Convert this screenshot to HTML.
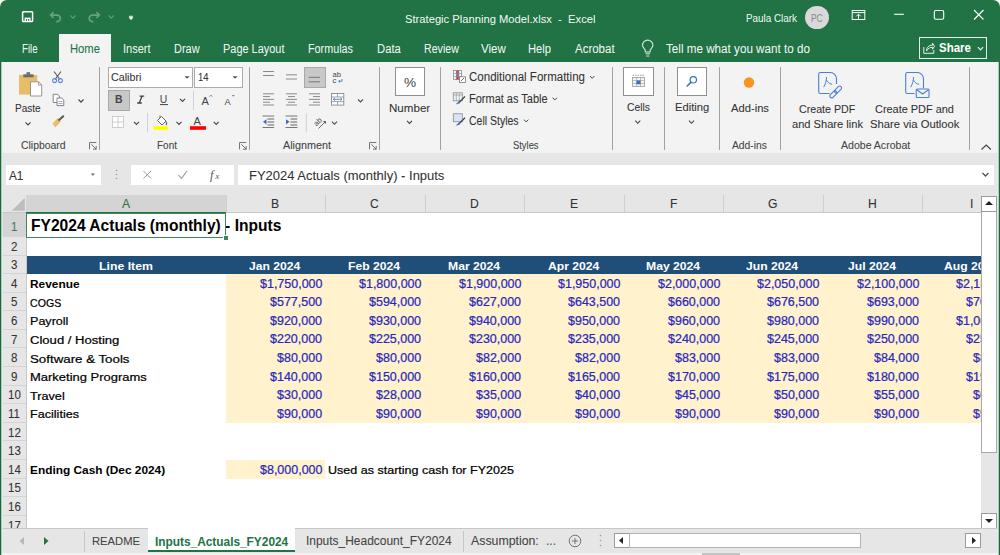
<!DOCTYPE html><html><head><meta charset="utf-8"><style>
html,body{margin:0;padding:0;width:1000px;height:555px;overflow:hidden;background:#fff}
body>div,body div,body svg{position:absolute}
.t{white-space:pre;transform-origin:0 0;font-family:"Liberation Sans",sans-serif}
.g{-webkit-text-stroke:0.22px currentColor}
.u{-webkit-text-stroke:0.08px currentColor}
body{font-family:"Liberation Sans",sans-serif}
</style></head><body>
<div style="left:0px;top:0px;width:1000px;height:63px;background:#217346;border-radius:7px 7px 0 0;"></div>
<div style="left:0px;top:62px;width:1000px;height:493px;background:#f3f3f3;"></div>
<div class="t u" style="left:404.50px;top:13.15px;font-size:11.63px;line-height:11.63px;color:rgba(255,255,255,0.95);transform:scaleX(0.9633);">Strategic Planning Model.xlsx  -  Excel</div>
<div class="t u" style="left:746.00px;top:12.15px;font-size:11.63px;line-height:11.63px;color:rgba(255,255,255,0.95);transform:scaleX(0.8485);">Paula Clark</div>
<div style="left:805px;top:5.5px;width:23.6px;height:23.6px;border-radius:50%;background:#d9d9d9;"></div>
<div class="t u" style="left:811.00px;top:12.65px;font-size:11.05px;line-height:11.05px;color:#8c8c8c;transform:scaleX(0.7624);">PC</div>
<div style="left:59px;top:34px;width:52px;height:29px;background:#f3f3f3;"></div>
<div class="t u" style="left:21.60px;top:42.66px;font-size:12.21px;line-height:12.21px;color:rgba(255,255,255,0.95);transform:scaleX(0.7929);">File</div>
<div class="t u" style="left:69.60px;top:42.66px;font-size:12.21px;line-height:12.21px;color:#217346;transform:scaleX(0.9211);">Home</div>
<div class="t u" style="left:123.40px;top:42.66px;font-size:12.21px;line-height:12.21px;color:rgba(255,255,255,0.95);transform:scaleX(0.9039);">Insert</div>
<div class="t u" style="left:174.40px;top:42.66px;font-size:12.21px;line-height:12.21px;color:rgba(255,255,255,0.95);transform:scaleX(0.8985);">Draw</div>
<div class="t u" style="left:223.00px;top:42.66px;font-size:12.21px;line-height:12.21px;color:rgba(255,255,255,0.95);transform:scaleX(0.8970);">Page Layout</div>
<div class="t u" style="left:308.00px;top:42.66px;font-size:12.21px;line-height:12.21px;color:rgba(255,255,255,0.95);transform:scaleX(0.8844);">Formulas</div>
<div class="t u" style="left:376.60px;top:42.66px;font-size:12.21px;line-height:12.21px;color:rgba(255,255,255,0.95);transform:scaleX(0.9228);">Data</div>
<div class="t u" style="left:423.50px;top:42.66px;font-size:12.21px;line-height:12.21px;color:rgba(255,255,255,0.95);transform:scaleX(0.8718);">Review</div>
<div class="t u" style="left:480.50px;top:42.66px;font-size:12.21px;line-height:12.21px;color:rgba(255,255,255,0.95);transform:scaleX(0.9450);">View</div>
<div class="t u" style="left:528.40px;top:42.66px;font-size:12.21px;line-height:12.21px;color:rgba(255,255,255,0.95);transform:scaleX(0.9199);">Help</div>
<div class="t u" style="left:574.60px;top:42.66px;font-size:12.21px;line-height:12.21px;color:rgba(255,255,255,0.95);transform:scaleX(0.9411);">Acrobat</div>
<div class="t u" style="left:666.00px;top:42.66px;font-size:12.21px;line-height:12.21px;color:rgba(255,255,255,0.95);transform:scaleX(0.9558);">Tell me what you want to do</div>
<div style="left:919px;top:37px;width:68px;height:21.5px;border:1.5px solid rgba(255,255,255,0.9);box-sizing:border-box;"></div>
<div class="t " style="left:939.00px;top:42.42px;font-size:12.50px;line-height:12.50px;color:#fff;font-weight:bold;transform:scaleX(0.9211);">Share</div>
<div class="t u" style="left:15.40px;top:102.65px;font-size:11.05px;line-height:11.05px;color:#333333;transform:scaleX(0.9063);">Paste</div>
<div class="t u" style="left:20.50px;top:141.49px;font-size:10.17px;line-height:10.17px;color:#444444;transform:scaleX(1.0264);">Clipboard</div>
<div class="t u" style="left:157.00px;top:141.49px;font-size:10.17px;line-height:10.17px;color:#444444;transform:scaleX(0.9824);">Font</div>
<div class="t u" style="left:283.00px;top:141.49px;font-size:10.17px;line-height:10.17px;color:#444444;transform:scaleX(1.0609);">Alignment</div>
<div class="t u" style="left:389.40px;top:101.75px;font-size:11.63px;line-height:11.63px;color:#333333;transform:scaleX(0.9962);">Number</div>
<div class="t u" style="left:469.40px;top:71.26px;font-size:12.21px;line-height:12.21px;color:#333333;transform:scaleX(0.9444);">Conditional Formatting</div>
<div class="t u" style="left:469.40px;top:93.06px;font-size:12.21px;line-height:12.21px;color:#333333;transform:scaleX(0.9002);">Format as Table</div>
<div class="t u" style="left:469.40px;top:114.86px;font-size:12.21px;line-height:12.21px;color:#333333;transform:scaleX(0.8600);">Cell Styles</div>
<div class="t u" style="left:513.40px;top:141.49px;font-size:10.17px;line-height:10.17px;color:#444444;transform:scaleX(0.9240);">Styles</div>
<div class="t u" style="left:626.60px;top:101.70px;font-size:11.34px;line-height:11.34px;color:#333333;transform:scaleX(0.9127);">Cells</div>
<div class="t u" style="left:674.80px;top:101.70px;font-size:11.34px;line-height:11.34px;color:#333333;transform:scaleX(0.9866);">Editing</div>
<div class="t u" style="left:731.00px;top:103.00px;font-size:11.34px;line-height:11.34px;color:#333333;transform:scaleX(0.9885);">Add-ins</div>
<div class="t u" style="left:732.00px;top:141.49px;font-size:10.17px;line-height:10.17px;color:#444444;transform:scaleX(1.0146);">Add-ins</div>
<div class="t u" style="left:799.30px;top:103.70px;font-size:11.34px;line-height:11.34px;color:#333333;transform:scaleX(0.9406);">Create PDF</div>
<div class="t u" style="left:792.00px;top:119.30px;font-size:11.34px;line-height:11.34px;color:#333333;transform:scaleX(0.9796);">and Share link</div>
<div class="t u" style="left:875.00px;top:103.70px;font-size:11.34px;line-height:11.34px;color:#333333;transform:scaleX(0.9644);">Create PDF and</div>
<div class="t u" style="left:870.00px;top:119.30px;font-size:11.34px;line-height:11.34px;color:#333333;transform:scaleX(0.9932);">Share via Outlook</div>
<div class="t u" style="left:840.70px;top:141.49px;font-size:10.17px;line-height:10.17px;color:#444444;transform:scaleX(1.0382);">Adobe Acrobat</div>
<div style="left:99px;top:67px;width:1px;height:83px;background:#a2a2a2;"></div>
<div style="left:249px;top:67px;width:1px;height:83px;background:#a2a2a2;"></div>
<div style="left:379px;top:67px;width:1px;height:83px;background:#a2a2a2;"></div>
<div style="left:440px;top:67px;width:1px;height:83px;background:#a2a2a2;"></div>
<div style="left:612px;top:67px;width:1px;height:83px;background:#a2a2a2;"></div>
<div style="left:664px;top:67px;width:1px;height:83px;background:#a2a2a2;"></div>
<div style="left:719px;top:67px;width:1px;height:83px;background:#a2a2a2;"></div>
<div style="left:780px;top:67px;width:1px;height:83px;background:#a2a2a2;"></div>
<div style="left:969px;top:67px;width:1px;height:83px;background:#a2a2a2;"></div>
<div style="left:108px;top:67px;width:84.5px;height:21px;background:#fff;border:1px solid #ababab;box-sizing:border-box;"></div>
<div style="left:194px;top:67px;width:48.5px;height:21px;background:#fff;border:1px solid #ababab;box-sizing:border-box;"></div>
<div class="t u" style="left:110.60px;top:72.18px;font-size:11.48px;line-height:11.48px;color:#333333;transform:scaleX(0.9342);">Calibri</div>
<div class="t u" style="left:197.50px;top:72.18px;font-size:11.48px;line-height:11.48px;color:#333333;transform:scaleX(0.8221);">14</div>
<div style="left:108px;top:90px;width:21.5px;height:21px;background:#c8c8c8;border:1px solid #a8a8a8;box-sizing:border-box;"></div>
<div style="left:304px;top:67px;width:22px;height:21px;background:#c8c8c8;border:1px solid #a8a8a8;box-sizing:border-box;"></div>
<div style="left:394.5px;top:67px;width:30.5px;height:29px;background:#fff;border:1px solid #8f8f8f;box-sizing:border-box;"></div>
<div style="left:623px;top:67px;width:30.5px;height:29px;background:#fff;border:1px solid #8f8f8f;box-sizing:border-box;"></div>
<div style="left:676.5px;top:67px;width:30.5px;height:29px;background:#fff;border:1px solid #8f8f8f;box-sizing:border-box;"></div>
<div style="left:1px;top:153px;width:998px;height:42px;background:#e6e6e6;"></div>
<div style="left:6px;top:165px;width:95px;height:20px;background:#fff;"></div>
<div style="left:131px;top:165px;width:103px;height:20px;background:#fff;"></div>
<div style="left:238px;top:165px;width:756px;height:20px;background:#fff;"></div>
<div class="t u" style="left:9.40px;top:170.02px;font-size:12.50px;line-height:12.50px;color:#333;transform:scaleX(0.9418);">A1</div>
<div class="t u" style="left:248.60px;top:169.12px;font-size:13.08px;line-height:13.08px;color:#333;transform:scaleX(0.9917);">FY2024 Actuals (monthly) - Inputs</div>
<div style="left:0;top:0;width:981px;height:528px;overflow:hidden">
<div style="left:1px;top:195px;width:1000px;height:18px;background:#e6e6e6;"></div>
<div style="left:26px;top:213px;width:1000px;height:315px;background:#ffffff;"></div>
<div style="left:1px;top:213px;width:25.5px;height:315px;background:#e6e6e6;"></div>
<div style="left:26px;top:195px;width:199.5px;height:17px;background:#d4d4d4;"></div>
<svg style="left:1px;top:195px" width="25" height="18" viewBox="1 195 25 18"><path d="M24.8 197.7 V210.7 H11.7 Z" fill="#bdbdbd"/></svg>
<div style="left:225.5px;top:195px;width:1px;height:17px;background:#cfcfcf;"></div>
<div style="left:325px;top:195px;width:1px;height:17px;background:#cfcfcf;"></div>
<div style="left:424.5px;top:195px;width:1px;height:17px;background:#cfcfcf;"></div>
<div style="left:524px;top:195px;width:1px;height:17px;background:#cfcfcf;"></div>
<div style="left:623.5px;top:195px;width:1px;height:17px;background:#cfcfcf;"></div>
<div style="left:723px;top:195px;width:1px;height:17px;background:#cfcfcf;"></div>
<div style="left:822.5px;top:195px;width:1px;height:17px;background:#cfcfcf;"></div>
<div style="left:922px;top:195px;width:1px;height:17px;background:#cfcfcf;"></div>
<div style="left:1px;top:212px;width:1000px;height:1px;background:#c8c8c8;"></div>
<div style="left:26px;top:211.5px;width:199.5px;height:2px;background:#217346;"></div>
<div class="t u" style="left:121.69px;top:197.76px;font-size:12.80px;line-height:12.80px;color:#2f6f4a;transform:scaleX(0.9500);">A</div>
<div class="t u" style="left:271.19px;top:197.76px;font-size:12.80px;line-height:12.80px;color:#333;transform:scaleX(0.9500);">B</div>
<div class="t u" style="left:370.36px;top:197.76px;font-size:12.80px;line-height:12.80px;color:#333;transform:scaleX(0.9500);">C</div>
<div class="t u" style="left:469.86px;top:197.76px;font-size:12.80px;line-height:12.80px;color:#333;transform:scaleX(0.9500);">D</div>
<div class="t u" style="left:569.69px;top:197.76px;font-size:12.80px;line-height:12.80px;color:#333;transform:scaleX(0.9500);">E</div>
<div class="t u" style="left:669.54px;top:197.76px;font-size:12.80px;line-height:12.80px;color:#333;transform:scaleX(0.9500);">F</div>
<div class="t u" style="left:768.02px;top:197.76px;font-size:12.80px;line-height:12.80px;color:#333;transform:scaleX(0.9500);">G</div>
<div class="t u" style="left:867.86px;top:197.76px;font-size:12.80px;line-height:12.80px;color:#333;transform:scaleX(0.9500);">H</div>
<div class="t u" style="left:970.06px;top:197.76px;font-size:12.80px;line-height:12.80px;color:#333;transform:scaleX(0.9500);">I</div>
<div style="left:1px;top:213px;width:25.5px;height:24px;background:#d4d4d4;"></div>
<div style="left:1px;top:236px;width:25px;height:1px;background:#d4d4d4;"></div>
<div class="t u" style="left:10.80px;top:220.56px;font-size:12.80px;line-height:12.80px;color:#3f7a58;transform:scaleX(0.9000);">1</div>
<div style="left:1px;top:255px;width:25px;height:1px;background:#d4d4d4;"></div>
<div class="t u" style="left:10.80px;top:240.76px;font-size:12.80px;line-height:12.80px;color:#333;transform:scaleX(0.9000);">2</div>
<div style="left:1px;top:273px;width:25px;height:1px;background:#d4d4d4;"></div>
<div class="t u" style="left:10.80px;top:259.26px;font-size:12.80px;line-height:12.80px;color:#333;transform:scaleX(0.9000);">3</div>
<div style="left:1px;top:292px;width:25px;height:1px;background:#d4d4d4;"></div>
<div class="t u" style="left:10.80px;top:277.86px;font-size:12.80px;line-height:12.80px;color:#333;transform:scaleX(0.9000);">4</div>
<div style="left:1px;top:310px;width:25px;height:1px;background:#d4d4d4;"></div>
<div class="t u" style="left:10.80px;top:296.46px;font-size:12.80px;line-height:12.80px;color:#333;transform:scaleX(0.9000);">5</div>
<div style="left:1px;top:329px;width:25px;height:1px;background:#d4d4d4;"></div>
<div class="t u" style="left:10.80px;top:315.06px;font-size:12.80px;line-height:12.80px;color:#333;transform:scaleX(0.9000);">6</div>
<div style="left:1px;top:347px;width:25px;height:1px;background:#d4d4d4;"></div>
<div class="t u" style="left:10.80px;top:333.66px;font-size:12.80px;line-height:12.80px;color:#333;transform:scaleX(0.9000);">7</div>
<div style="left:1px;top:366px;width:25px;height:1px;background:#d4d4d4;"></div>
<div class="t u" style="left:10.80px;top:352.26px;font-size:12.80px;line-height:12.80px;color:#333;transform:scaleX(0.9000);">8</div>
<div style="left:1px;top:385px;width:25px;height:1px;background:#d4d4d4;"></div>
<div class="t u" style="left:10.80px;top:370.86px;font-size:12.80px;line-height:12.80px;color:#333;transform:scaleX(0.9000);">9</div>
<div style="left:1px;top:403px;width:25px;height:1px;background:#d4d4d4;"></div>
<div class="t u" style="left:7.59px;top:389.46px;font-size:12.80px;line-height:12.80px;color:#333;transform:scaleX(0.9000);">10</div>
<div style="left:1px;top:422px;width:25px;height:1px;background:#d4d4d4;"></div>
<div class="t u" style="left:8.02px;top:408.06px;font-size:12.80px;line-height:12.80px;color:#333;transform:scaleX(0.9000);">11</div>
<div style="left:1px;top:440px;width:25px;height:1px;background:#d4d4d4;"></div>
<div class="t u" style="left:7.59px;top:426.66px;font-size:12.80px;line-height:12.80px;color:#333;transform:scaleX(0.9000);">12</div>
<div style="left:1px;top:459px;width:25px;height:1px;background:#d4d4d4;"></div>
<div class="t u" style="left:7.59px;top:445.26px;font-size:12.80px;line-height:12.80px;color:#333;transform:scaleX(0.9000);">13</div>
<div style="left:1px;top:478px;width:25px;height:1px;background:#d4d4d4;"></div>
<div class="t u" style="left:7.59px;top:463.86px;font-size:12.80px;line-height:12.80px;color:#333;transform:scaleX(0.9000);">14</div>
<div style="left:1px;top:496px;width:25px;height:1px;background:#d4d4d4;"></div>
<div class="t u" style="left:7.59px;top:482.46px;font-size:12.80px;line-height:12.80px;color:#333;transform:scaleX(0.9000);">15</div>
<div style="left:1px;top:515px;width:25px;height:1px;background:#d4d4d4;"></div>
<div class="t u" style="left:7.59px;top:501.06px;font-size:12.80px;line-height:12.80px;color:#333;transform:scaleX(0.9000);">16</div>
<div style="left:1px;top:533px;width:25px;height:1px;background:#d4d4d4;"></div>
<div class="t u" style="left:7.59px;top:519.66px;font-size:12.80px;line-height:12.80px;color:#333;transform:scaleX(0.9000);">17</div>
<div style="left:26px;top:213px;width:1px;height:315px;background:#c8c8c8;"></div>
<div style="left:27px;top:255.5px;width:1000px;height:18.5px;background:#1f4e78;"></div>
<div style="left:225.5px;top:274px;width:800px;height:148.8px;background:#fff2cc;"></div>
<div style="left:225.5px;top:460px;width:99.5px;height:18.6px;background:#fff2cc;"></div>
<div class="t " style="left:30.60px;top:218.06px;font-size:15.99px;line-height:15.99px;color:#000;font-weight:bold;transform:scaleX(0.9742);">FY2024 Actuals (monthly) - Inputs</div>
<div style="left:26px;top:212.5px;width:200px;height:25px;border:1.5px solid #3b8a5a;box-sizing:border-box;"></div>
<div style="left:223px;top:235px;width:4px;height:4px;background:#3b8a5a;border:1px solid #fff;box-sizing:content-box;"></div>
<div class="t " style="left:99.00px;top:259.95px;font-size:11.63px;line-height:11.63px;color:#fff;font-weight:bold;transform:scaleX(1.0579);">Line Item</div>
<div class="t " style="left:249.05px;top:259.98px;font-size:11.60px;line-height:11.60px;color:#fff;font-weight:bold;transform:scaleX(1.0486);">Jan 2024</div>
<div class="t " style="left:348.22px;top:259.98px;font-size:11.60px;line-height:11.60px;color:#fff;font-weight:bold;transform:scaleX(1.0486);">Feb 2024</div>
<div class="t " style="left:447.71px;top:259.98px;font-size:11.60px;line-height:11.60px;color:#fff;font-weight:bold;transform:scaleX(1.0486);">Mar 2024</div>
<div class="t " style="left:547.56px;top:259.98px;font-size:11.60px;line-height:11.60px;color:#fff;font-weight:bold;transform:scaleX(1.0486);">Apr 2024</div>
<div class="t " style="left:645.70px;top:259.98px;font-size:11.60px;line-height:11.60px;color:#fff;font-weight:bold;transform:scaleX(1.0486);">May 2024</div>
<div class="t " style="left:746.22px;top:259.98px;font-size:11.60px;line-height:11.60px;color:#fff;font-weight:bold;transform:scaleX(1.0486);">Jun 2024</div>
<div class="t " style="left:847.74px;top:259.98px;font-size:11.60px;line-height:11.60px;color:#fff;font-weight:bold;transform:scaleX(1.0486);">Jul 2024</div>
<div class="t " style="left:944.21px;top:259.98px;font-size:11.60px;line-height:11.60px;color:#fff;font-weight:bold;transform:scaleX(1.0486);">Aug 2024</div>
<div class="t " style="left:30.00px;top:278.15px;font-size:11.63px;line-height:11.63px;color:#000;font-weight:bold;transform:scaleX(1.0212);">Revenue</div>
<div class="t g" style="left:259.50px;top:277.50px;font-size:12.40px;line-height:12.40px;color:#2727bd;transform:scaleX(1.0071);">$1,750,000</div>
<div class="t g" style="left:359.00px;top:277.50px;font-size:12.40px;line-height:12.40px;color:#2727bd;transform:scaleX(1.0071);">$1,800,000</div>
<div class="t g" style="left:458.50px;top:277.50px;font-size:12.40px;line-height:12.40px;color:#2727bd;transform:scaleX(1.0071);">$1,900,000</div>
<div class="t g" style="left:558.00px;top:277.50px;font-size:12.40px;line-height:12.40px;color:#2727bd;transform:scaleX(1.0071);">$1,950,000</div>
<div class="t g" style="left:657.50px;top:277.50px;font-size:12.40px;line-height:12.40px;color:#2727bd;transform:scaleX(1.0071);">$2,000,000</div>
<div class="t g" style="left:757.00px;top:277.50px;font-size:12.40px;line-height:12.40px;color:#2727bd;transform:scaleX(1.0071);">$2,050,000</div>
<div class="t g" style="left:856.50px;top:277.50px;font-size:12.40px;line-height:12.40px;color:#2727bd;transform:scaleX(1.0071);">$2,100,000</div>
<div class="t g" style="left:956.00px;top:277.50px;font-size:12.40px;line-height:12.40px;color:#2727bd;transform:scaleX(1.0071);">$2,150,000</div>
<div class="t g" style="left:30.00px;top:296.75px;font-size:11.63px;line-height:11.63px;color:#000;transform:scaleX(0.9112);">COGS</div>
<div class="t g" style="left:269.91px;top:296.10px;font-size:12.40px;line-height:12.40px;color:#2727bd;transform:scaleX(1.0071);">$577,500</div>
<div class="t g" style="left:369.41px;top:296.10px;font-size:12.40px;line-height:12.40px;color:#2727bd;transform:scaleX(1.0071);">$594,000</div>
<div class="t g" style="left:468.91px;top:296.10px;font-size:12.40px;line-height:12.40px;color:#2727bd;transform:scaleX(1.0071);">$627,000</div>
<div class="t g" style="left:568.41px;top:296.10px;font-size:12.40px;line-height:12.40px;color:#2727bd;transform:scaleX(1.0071);">$643,500</div>
<div class="t g" style="left:667.91px;top:296.10px;font-size:12.40px;line-height:12.40px;color:#2727bd;transform:scaleX(1.0071);">$660,000</div>
<div class="t g" style="left:767.41px;top:296.10px;font-size:12.40px;line-height:12.40px;color:#2727bd;transform:scaleX(1.0071);">$676,500</div>
<div class="t g" style="left:866.91px;top:296.10px;font-size:12.40px;line-height:12.40px;color:#2727bd;transform:scaleX(1.0071);">$693,000</div>
<div class="t g" style="left:966.41px;top:296.10px;font-size:12.40px;line-height:12.40px;color:#2727bd;transform:scaleX(1.0071);">$709,500</div>
<div class="t g" style="left:30.00px;top:315.35px;font-size:11.63px;line-height:11.63px;color:#000;transform:scaleX(1.0804);">Payroll</div>
<div class="t g" style="left:269.91px;top:314.70px;font-size:12.40px;line-height:12.40px;color:#2727bd;transform:scaleX(1.0071);">$920,000</div>
<div class="t g" style="left:369.41px;top:314.70px;font-size:12.40px;line-height:12.40px;color:#2727bd;transform:scaleX(1.0071);">$930,000</div>
<div class="t g" style="left:468.91px;top:314.70px;font-size:12.40px;line-height:12.40px;color:#2727bd;transform:scaleX(1.0071);">$940,000</div>
<div class="t g" style="left:568.41px;top:314.70px;font-size:12.40px;line-height:12.40px;color:#2727bd;transform:scaleX(1.0071);">$950,000</div>
<div class="t g" style="left:667.91px;top:314.70px;font-size:12.40px;line-height:12.40px;color:#2727bd;transform:scaleX(1.0071);">$960,000</div>
<div class="t g" style="left:767.41px;top:314.70px;font-size:12.40px;line-height:12.40px;color:#2727bd;transform:scaleX(1.0071);">$980,000</div>
<div class="t g" style="left:866.91px;top:314.70px;font-size:12.40px;line-height:12.40px;color:#2727bd;transform:scaleX(1.0071);">$990,000</div>
<div class="t g" style="left:956.00px;top:314.70px;font-size:12.40px;line-height:12.40px;color:#2727bd;transform:scaleX(1.0071);">$1,000,000</div>
<div class="t g" style="left:30.00px;top:333.95px;font-size:11.63px;line-height:11.63px;color:#000;transform:scaleX(1.1245);">Cloud / Hosting</div>
<div class="t g" style="left:269.91px;top:333.30px;font-size:12.40px;line-height:12.40px;color:#2727bd;transform:scaleX(1.0071);">$220,000</div>
<div class="t g" style="left:369.41px;top:333.30px;font-size:12.40px;line-height:12.40px;color:#2727bd;transform:scaleX(1.0071);">$225,000</div>
<div class="t g" style="left:468.91px;top:333.30px;font-size:12.40px;line-height:12.40px;color:#2727bd;transform:scaleX(1.0071);">$230,000</div>
<div class="t g" style="left:568.41px;top:333.30px;font-size:12.40px;line-height:12.40px;color:#2727bd;transform:scaleX(1.0071);">$235,000</div>
<div class="t g" style="left:667.91px;top:333.30px;font-size:12.40px;line-height:12.40px;color:#2727bd;transform:scaleX(1.0071);">$240,000</div>
<div class="t g" style="left:767.41px;top:333.30px;font-size:12.40px;line-height:12.40px;color:#2727bd;transform:scaleX(1.0071);">$245,000</div>
<div class="t g" style="left:866.91px;top:333.30px;font-size:12.40px;line-height:12.40px;color:#2727bd;transform:scaleX(1.0071);">$250,000</div>
<div class="t g" style="left:966.41px;top:333.30px;font-size:12.40px;line-height:12.40px;color:#2727bd;transform:scaleX(1.0071);">$255,000</div>
<div class="t g" style="left:30.00px;top:352.55px;font-size:11.63px;line-height:11.63px;color:#000;transform:scaleX(1.1432);">Software &amp; Tools</div>
<div class="t g" style="left:276.86px;top:351.90px;font-size:12.40px;line-height:12.40px;color:#2727bd;transform:scaleX(1.0071);">$80,000</div>
<div class="t g" style="left:376.36px;top:351.90px;font-size:12.40px;line-height:12.40px;color:#2727bd;transform:scaleX(1.0071);">$80,000</div>
<div class="t g" style="left:475.86px;top:351.90px;font-size:12.40px;line-height:12.40px;color:#2727bd;transform:scaleX(1.0071);">$82,000</div>
<div class="t g" style="left:575.36px;top:351.90px;font-size:12.40px;line-height:12.40px;color:#2727bd;transform:scaleX(1.0071);">$82,000</div>
<div class="t g" style="left:674.86px;top:351.90px;font-size:12.40px;line-height:12.40px;color:#2727bd;transform:scaleX(1.0071);">$83,000</div>
<div class="t g" style="left:774.36px;top:351.90px;font-size:12.40px;line-height:12.40px;color:#2727bd;transform:scaleX(1.0071);">$83,000</div>
<div class="t g" style="left:873.86px;top:351.90px;font-size:12.40px;line-height:12.40px;color:#2727bd;transform:scaleX(1.0071);">$84,000</div>
<div class="t g" style="left:973.36px;top:351.90px;font-size:12.40px;line-height:12.40px;color:#2727bd;transform:scaleX(1.0071);">$85,000</div>
<div class="t g" style="left:30.00px;top:371.15px;font-size:11.63px;line-height:11.63px;color:#000;transform:scaleX(1.1157);">Marketing Programs</div>
<div class="t g" style="left:269.91px;top:370.50px;font-size:12.40px;line-height:12.40px;color:#2727bd;transform:scaleX(1.0071);">$140,000</div>
<div class="t g" style="left:369.41px;top:370.50px;font-size:12.40px;line-height:12.40px;color:#2727bd;transform:scaleX(1.0071);">$150,000</div>
<div class="t g" style="left:468.91px;top:370.50px;font-size:12.40px;line-height:12.40px;color:#2727bd;transform:scaleX(1.0071);">$160,000</div>
<div class="t g" style="left:568.41px;top:370.50px;font-size:12.40px;line-height:12.40px;color:#2727bd;transform:scaleX(1.0071);">$165,000</div>
<div class="t g" style="left:667.91px;top:370.50px;font-size:12.40px;line-height:12.40px;color:#2727bd;transform:scaleX(1.0071);">$170,000</div>
<div class="t g" style="left:767.41px;top:370.50px;font-size:12.40px;line-height:12.40px;color:#2727bd;transform:scaleX(1.0071);">$175,000</div>
<div class="t g" style="left:866.91px;top:370.50px;font-size:12.40px;line-height:12.40px;color:#2727bd;transform:scaleX(1.0071);">$180,000</div>
<div class="t g" style="left:966.41px;top:370.50px;font-size:12.40px;line-height:12.40px;color:#2727bd;transform:scaleX(1.0071);">$190,000</div>
<div class="t g" style="left:30.00px;top:389.75px;font-size:11.63px;line-height:11.63px;color:#000;transform:scaleX(1.0886);">Travel</div>
<div class="t g" style="left:276.86px;top:389.10px;font-size:12.40px;line-height:12.40px;color:#2727bd;transform:scaleX(1.0071);">$30,000</div>
<div class="t g" style="left:376.36px;top:389.10px;font-size:12.40px;line-height:12.40px;color:#2727bd;transform:scaleX(1.0071);">$28,000</div>
<div class="t g" style="left:475.86px;top:389.10px;font-size:12.40px;line-height:12.40px;color:#2727bd;transform:scaleX(1.0071);">$35,000</div>
<div class="t g" style="left:575.36px;top:389.10px;font-size:12.40px;line-height:12.40px;color:#2727bd;transform:scaleX(1.0071);">$40,000</div>
<div class="t g" style="left:674.86px;top:389.10px;font-size:12.40px;line-height:12.40px;color:#2727bd;transform:scaleX(1.0071);">$45,000</div>
<div class="t g" style="left:774.36px;top:389.10px;font-size:12.40px;line-height:12.40px;color:#2727bd;transform:scaleX(1.0071);">$50,000</div>
<div class="t g" style="left:873.86px;top:389.10px;font-size:12.40px;line-height:12.40px;color:#2727bd;transform:scaleX(1.0071);">$55,000</div>
<div class="t g" style="left:973.36px;top:389.10px;font-size:12.40px;line-height:12.40px;color:#2727bd;transform:scaleX(1.0071);">$60,000</div>
<div class="t g" style="left:30.00px;top:408.35px;font-size:11.63px;line-height:11.63px;color:#000;transform:scaleX(1.0834);">Facilities</div>
<div class="t g" style="left:276.86px;top:407.70px;font-size:12.40px;line-height:12.40px;color:#2727bd;transform:scaleX(1.0071);">$90,000</div>
<div class="t g" style="left:376.36px;top:407.70px;font-size:12.40px;line-height:12.40px;color:#2727bd;transform:scaleX(1.0071);">$90,000</div>
<div class="t g" style="left:475.86px;top:407.70px;font-size:12.40px;line-height:12.40px;color:#2727bd;transform:scaleX(1.0071);">$90,000</div>
<div class="t g" style="left:575.36px;top:407.70px;font-size:12.40px;line-height:12.40px;color:#2727bd;transform:scaleX(1.0071);">$90,000</div>
<div class="t g" style="left:674.86px;top:407.70px;font-size:12.40px;line-height:12.40px;color:#2727bd;transform:scaleX(1.0071);">$90,000</div>
<div class="t g" style="left:774.36px;top:407.70px;font-size:12.40px;line-height:12.40px;color:#2727bd;transform:scaleX(1.0071);">$90,000</div>
<div class="t g" style="left:873.86px;top:407.70px;font-size:12.40px;line-height:12.40px;color:#2727bd;transform:scaleX(1.0071);">$90,000</div>
<div class="t g" style="left:973.36px;top:407.70px;font-size:12.40px;line-height:12.40px;color:#2727bd;transform:scaleX(1.0071);">$90,000</div>
<div class="t " style="left:30.20px;top:464.15px;font-size:11.63px;line-height:11.63px;color:#000;font-weight:bold;transform:scaleX(1.0206);">Ending Cash (Dec 2024)</div>
<div class="t g" style="left:259.50px;top:463.50px;font-size:12.40px;line-height:12.40px;color:#2727bd;transform:scaleX(1.0071);">$8,000,000</div>
<div class="t g" style="left:328.00px;top:464.15px;font-size:11.63px;line-height:11.63px;color:#000;transform:scaleX(1.0773);">Used as starting cash for FY2025</div>
</div>
<div style="left:981px;top:195px;width:18px;height:333px;background:#e6e6e6;"></div>
<div style="left:981px;top:195.5px;width:16px;height:16px;background:#fff;border:1.5px solid #9a9a9a;box-sizing:border-box;"></div>
<div style="left:981px;top:211.5px;width:16px;height:241px;background:#fff;border:1.5px solid #a8a8a8;border-top:0;box-sizing:border-box;"></div>
<div style="left:981px;top:512.5px;width:16px;height:16px;background:#fff;border:1.5px solid #9a9a9a;box-sizing:border-box;"></div>
<svg style="left:984px;top:199px;" width="10" height="8" viewBox="0 0 10 8"><path d="M1 6 L5 2 L9 6 Z" fill="#222"/></svg>
<svg style="left:984px;top:517px;" width="10" height="8" viewBox="0 0 10 8"><path d="M1 2 L5 6 L9 2 Z" fill="#222"/></svg>
<div style="left:1px;top:528px;width:998px;height:24.5px;background:#e6e6e6;"></div>
<div style="left:1px;top:528px;width:998px;height:1px;background:#c6c6c6;"></div>
<div style="left:1px;top:552.5px;width:998px;height:2.5px;background:#f3f3f3;"></div>
<div style="left:702px;top:553px;width:38px;height:2px;background:#c4c4c4;"></div>
<div style="left:83.5px;top:531px;width:1px;height:21px;background:#c6c6c6;"></div>
<div style="left:148px;top:528px;width:147px;height:24px;background:#ffffff;"></div>
<div style="left:148px;top:549.5px;width:147px;height:2px;background:#217346;"></div>
<div style="left:463px;top:531px;width:1px;height:21px;background:#c6c6c6;"></div>
<div class="t u" style="left:91.50px;top:535.35px;font-size:11.63px;line-height:11.63px;color:#444;transform:scaleX(0.9649);">README</div>
<div class="t " style="left:154.80px;top:534.52px;font-size:13.08px;line-height:13.08px;color:#217346;font-weight:bold;transform:scaleX(0.9070);">Inputs_Actuals_FY2024</div>
<div class="t u" style="left:306.00px;top:535.02px;font-size:12.50px;line-height:12.50px;color:#444;transform:scaleX(0.9566);">Inputs_Headcount_FY2024</div>
<div class="t u" style="left:471.00px;top:535.02px;font-size:12.50px;line-height:12.50px;color:#444;transform:scaleX(0.9857);">Assumption:</div>
<div class="t u" style="left:546.00px;top:535.02px;font-size:12.50px;line-height:12.50px;color:#217346;transform:scaleX(0.9598);">...</div>
<svg style="left:16px;top:535px;" width="40" height="12" viewBox="0 0 40 12"><path d="M8 2 L3.5 6 L8 10 Z" fill="#b8b8b8"/><path d="M28 2 L32.5 6 L28 10 Z" fill="#217346"/></svg>
<svg style="left:568px;top:534px;" width="14" height="14" viewBox="0 0 14 14"><circle cx="7" cy="7" r="5.8" fill="none" stroke="#777" stroke-width="1"/><path d="M7 4 V10 M4 7 H10" stroke="#777" stroke-width="1"/></svg>
<svg style="left:598px;top:533px;" width="5" height="16" viewBox="0 0 5 16"><circle cx="2.5" cy="2.5" r="0.8" fill="#999"/><circle cx="2.5" cy="7.5" r="0.8" fill="#999"/><circle cx="2.5" cy="12.5" r="0.8" fill="#999"/></svg>
<div style="left:613.5px;top:533px;width:16px;height:14.5px;background:#fff;border:1px solid #9a9a9a;box-sizing:border-box;"></div>
<div style="left:629px;top:533px;width:232px;height:14.5px;background:#fff;border:1px solid #b4b4b4;box-sizing:border-box;"></div>
<div style="left:965px;top:533px;width:16px;height:14.5px;background:#fff;border:1px solid #9a9a9a;box-sizing:border-box;"></div>
<svg style="left:617px;top:536px;" width="9" height="9" viewBox="0 0 9 9"><path d="M6 1 L2 4.5 L6 8 Z" fill="#222"/></svg>
<svg style="left:969px;top:536px;" width="9" height="9" viewBox="0 0 9 9"><path d="M3 1 L7 4.5 L3 8 Z" fill="#222"/></svg>
<svg style="left:18px;top:6px" width="122" height="22" viewBox="18 6 122 22"><rect x="22.6" y="11.8" width="10" height="9.8" rx="0.8" fill="none" stroke="#fff" stroke-width="1.5"/><rect x="24.6" y="17.6" width="6" height="4.2" fill="#fff"/><rect x="25.9" y="19" width="1.1" height="1.8" fill="#217346"/><rect x="28.2" y="19" width="1.1" height="1.8" fill="#217346"/><path d="M53.6 12.2 L50.6 15.1 L53.6 18 M51 15.1 H57 A3.3 3.3 0 0 1 57 21.7 H56.2" fill="none" stroke="rgba(255,255,255,0.32)" stroke-width="1.7"/><path d="M70.3 15.299999999999999 L73 18.099999999999998 L75.7 15.299999999999999" fill="none" stroke="rgba(255,255,255,0.3)" stroke-width="1.2"/><path d="M96.4 12.2 L99.4 15.1 L96.4 18 M99 15.1 H92.5 A3.3 3.3 0 0 0 92.5 21.7 H93.3" fill="none" stroke="rgba(255,255,255,0.32)" stroke-width="1.7"/><path d="M108.5 15.299999999999999 L111.2 18.099999999999998 L113.9 15.299999999999999" fill="none" stroke="rgba(255,255,255,0.3)" stroke-width="1.2"/><path d="M129 16.3 H133 M129.3 17.6 L131 19.6 L132.7 17.6 Z" fill="#fff" stroke="#fff" stroke-width="0.9"/></svg>
<svg style="left:845px;top:4px" width="150" height="24" viewBox="845 4 150 24"><rect x="852.2" y="10.5" width="12.6" height="9" fill="none" stroke="#fff" stroke-width="1"/><path d="M852.2 12.6 H864.8" stroke="#fff" stroke-width="1"/><path d="M858.5 19.3 V14.2 M856.3 16.3 L858.5 14.1 L860.7 16.3" fill="none" stroke="#fff" stroke-width="1"/><path d="M894.2 14.3 H903.8" stroke="#fff" stroke-width="1.1"/><rect x="934.3" y="10.5" width="9.4" height="8.8" rx="1.5" fill="none" stroke="#fff" stroke-width="1.1"/><path d="M974 10 L983.5 19.5 M983.5 10 L974 19.5" stroke="#fff" stroke-width="1.1"/></svg>
<svg style="left:638px;top:38px" width="20" height="22" viewBox="638 38 20 22"><path d="M645.3 52 V50.6 C645.3 49 642.5 47.8 642.5 45.3 A5.2 5.2 0 0 1 652.9 45.3 C652.9 47.8 650.1 49 650.1 50.6 V52 Z" fill="none" stroke="#d8eadf" stroke-width="1.1"/><path d="M645.5 53.8 H650 M646.2 56 H649.3" stroke="#d8eadf" stroke-width="1.1"/></svg>
<svg style="left:920px;top:38px" width="70" height="20" viewBox="920 38 70 20"><path d="M923.8 47 V53.3 H933.8 V50" fill="none" stroke="#e8f2ec" stroke-width="1"/><path d="M926.5 51 C926.5 47 929 45.2 932.5 45.2 V43.2 L934.5 46.3 L932.5 49.3 V47.3 C930 47.3 928 48.3 926.5 51 Z" fill="none" stroke="#e8f2ec" stroke-width="1"/><path d="M977.9 47.1 L980.5 49.9 L983.1 47.1" fill="none" stroke="#e8f2ec" stroke-width="1.1"/></svg>
<svg style="left:15px;top:66px" width="85" height="89" viewBox="15 66 85 89"><rect x="19" y="75" width="18.3" height="19.6" fill="#e8bd6a"/><rect x="23.3" y="74.3" width="10.3" height="3" fill="#6b6b6b"/><rect x="26.5" y="72.2" width="3.6" height="2.4" fill="#6b6b6b"/><path d="M30.5 81.8 H38.5 L41.7 85 V96 H30.5 Z" fill="#fff" stroke="#8a8a8a" stroke-width="0.9"/><path d="M38.5 81.8 V85 H41.7" fill="none" stroke="#8a8a8a" stroke-width="0.8"/><path d="M25.5 122.4 L28 125.0 L30.5 122.4" fill="none" stroke="#444" stroke-width="1.1"/><path d="M54 71.5 L60 79.5 M61 71.5 L55 79.5" stroke="#555" stroke-width="1.1"/><circle cx="54.6" cy="80.6" r="2" fill="none" stroke="#5a8ad0" stroke-width="1.1"/><circle cx="60.4" cy="80.6" r="2" fill="none" stroke="#5a8ad0" stroke-width="1.1"/><path d="M53.2 94.3 H57.6 L59.3 96 V102.5 H53.2 Z" fill="#fff" stroke="#777" stroke-width="0.9"/><path d="M57 98 H61.8 L63.8 100 V105.6 H57 Z" fill="#fff" stroke="#777" stroke-width="0.9"/><path d="M58.3 101.5 H62.5 M58.3 103.5 H62.5" stroke="#7c9cc8" stroke-width="0.8"/><path d="M78.5 99.5 L81 102.1 L83.5 99.5" fill="none" stroke="#444" stroke-width="1.1"/><path d="M52.5 123.5 L57.8 118 L61 121.2 L55.2 127.5 Z" fill="#e8bd6a"/><path d="M58.5 120.5 L63.8 115.8" stroke="#555" stroke-width="2"/><path d="M89.5 149.3 V142.5 H96.3 M91.3 144.3 L96.2 149.2 M96.2 146 V149.2 H93" fill="none" stroke="#666" stroke-width="0.9"/></svg>
<svg style="left:100px;top:64px" width="150" height="91" viewBox="100 64 150 91"><path d="M184.5 76.3 L187 78.8 L189.5 76.3 Z M232.5 76.3 L235 78.8 L237.5 76.3 Z" fill="#555"/><text x="115" y="102.8" font-family="Liberation Sans" font-weight="bold" font-size="10.4" fill="#444">B</text><path d="M142 96.2 L139.2 103 M139.6 96.2 H144.2 M137.2 103 H141.8" fill="none" stroke="#444" stroke-width="1.3"/><text x="159.8" y="102.8" font-family="Liberation Sans" font-size="10.4" fill="#444">U</text><path d="M160 104.6 H168" stroke="#444" stroke-width="1"/><path d="M180.0 98.9 L182.5 101.5 L185.0 98.9" fill="none" stroke="#444" stroke-width="1.1"/><rect x="193" y="91" width="1" height="19" fill="#d0d0d0"/><text x="201.5" y="105" font-family="Liberation Sans" font-size="11" fill="#444">A</text><path d="M209.3 96.8 L210.8 95 L212.3 96.8" fill="none" stroke="#5a8ad0" stroke-width="0.9"/><text x="224.6" y="105" font-family="Liberation Sans" font-size="9.2" fill="#444">A</text><path d="M231.8 95 L234.8 95 L233.3 96.8 Z" fill="#5a8ad0"/><rect x="112.5" y="116.5" width="11" height="11" fill="#fff" stroke="#c8c8c8" stroke-width="0.9"/><path d="M118 116.5 V127.5 M112.5 122 H123.5" stroke="#c8c8c8" stroke-width="0.9"/><path d="M134.0 121.9 L136.5 124.5 L139.0 121.9" fill="none" stroke="#444" stroke-width="1.1"/><rect x="147" y="113" width="1" height="19.5" fill="#d0d0d0"/><path d="M157.5 120.5 L161.5 116.5 L166 121 L162 125 Z" fill="#fff" stroke="#555" stroke-width="0.9"/><path d="M160 118 V115.5" stroke="#555" stroke-width="0.9"/><path d="M165.5 121.2 C167 123 167 124.5 165.8 125" fill="none" stroke="#3a6fc0" stroke-width="1.2"/><rect x="153.3" y="126.2" width="15" height="3.6" fill="#ffff00"/><path d="M176.5 121.9 L179 124.5 L181.5 121.9" fill="none" stroke="#444" stroke-width="1.1"/><text x="193.6" y="125.3" font-family="Liberation Sans" font-size="11" fill="#444">A</text><rect x="190" y="126.2" width="16" height="3.6" fill="#ff0000"/><path d="M213.7 121.9 L216.2 124.5 L218.7 121.9" fill="none" stroke="#444" stroke-width="1.1"/><path d="M239.5 149.3 V142.5 H246.3 M241.3 144.3 L246.2 149.2 M246.2 146 V149.2 H243" fill="none" stroke="#666" stroke-width="0.9"/></svg>
<svg style="left:255px;top:64px" width="125" height="91" viewBox="255 64 125 91"><path d="M263 71.5 H274" stroke="#8a8a8a" stroke-width="1"/><path d="M263 75.5 H274" stroke="#8a8a8a" stroke-width="1"/><path d="M286 74.8 H297" stroke="#8a8a8a" stroke-width="1"/><path d="M286 79 H297" stroke="#8a8a8a" stroke-width="1"/><path d="M308.6 77.3 H320.0" stroke="#777" stroke-width="1"/><path d="M308.6 81.8 H320.0" stroke="#777" stroke-width="1"/><text x="332.5" y="77" font-family="Liberation Sans" font-size="7.6" fill="#444">ab</text><text x="332.5" y="83.2" font-family="Liberation Sans" font-size="7.6" fill="#444">c</text><path d="M342 79 V81.3 H338.7 M340 80 L338.7 81.3 L340 82.6" fill="none" stroke="#3a6fc0" stroke-width="0.8"/><path d="M263 93.8 H274" stroke="#8a8a8a" stroke-width="1"/><path d="M263 96.6 H270" stroke="#8a8a8a" stroke-width="1"/><path d="M263 99.4 H274" stroke="#8a8a8a" stroke-width="1"/><path d="M263 102.2 H270" stroke="#8a8a8a" stroke-width="1"/><path d="M263 105 H274" stroke="#8a8a8a" stroke-width="1"/><path d="M286.0 93.8 H297.0" stroke="#8a8a8a" stroke-width="1"/><path d="M288.0 96.6 H295.0" stroke="#8a8a8a" stroke-width="1"/><path d="M286.0 99.4 H297.0" stroke="#8a8a8a" stroke-width="1"/><path d="M288.0 102.2 H295.0" stroke="#8a8a8a" stroke-width="1"/><path d="M286.0 105 H297.0" stroke="#8a8a8a" stroke-width="1"/><path d="M309 93.8 H320" stroke="#8a8a8a" stroke-width="1"/><path d="M313 96.6 H320" stroke="#8a8a8a" stroke-width="1"/><path d="M309 99.4 H320" stroke="#8a8a8a" stroke-width="1"/><path d="M313 102.2 H320" stroke="#8a8a8a" stroke-width="1"/><path d="M309 105 H320" stroke="#8a8a8a" stroke-width="1"/><rect x="331.5" y="93.5" width="12.3" height="11.6" fill="#fff" stroke="#8a8a8a" stroke-width="0.9"/><path d="M331.5 97 H343.8 M331.5 101.6 H343.8 M337.6 93.5 V97 M337.6 101.6 V105.1" stroke="#8a8a8a" stroke-width="0.8"/><path d="M333.3 99.3 H342 M334.8 98 L333.3 99.3 L334.8 100.6 M340.5 98 L342 99.3 L340.5 100.6" fill="none" stroke="#3a6fc0" stroke-width="0.8"/><path d="M358.0 99.3 L360.5 101.89999999999999 L363.0 99.3" fill="none" stroke="#444" stroke-width="1.1"/><path d="M262.5 116 H274.2" stroke="#777" stroke-width="1"/><path d="M262.5 127.5 H274.2" stroke="#777" stroke-width="1"/><path d="M267.5 119 H274.2" stroke="#9a9a9a" stroke-width="1.6"/><path d="M267.5 122 H274.2" stroke="#9a9a9a" stroke-width="1.6"/><path d="M267.5 125 H274.2" stroke="#9a9a9a" stroke-width="1.6"/><path d="M266.5 119.2 L263 121.8 L266.5 124.4 Z" fill="#3a6fc0"/><path d="M285.5 116 H297.5" stroke="#777" stroke-width="1"/><path d="M285.5 127.5 H297.5" stroke="#777" stroke-width="1"/><path d="M290.5 119 H297.2" stroke="#9a9a9a" stroke-width="1.6"/><path d="M290.5 122 H297.2" stroke="#9a9a9a" stroke-width="1.6"/><path d="M290.5 125 H297.2" stroke="#9a9a9a" stroke-width="1.6"/><path d="M286 119.2 L289.5 121.8 L286 124.4 Z" fill="#3a6fc0"/><rect x="305.8" y="113.2" width="1" height="19" fill="#d0d0d0"/><text x="0" y="0" transform="translate(316.5 126.5) rotate(-45)" font-family="Liberation Sans" font-size="7.4" fill="#444">ab</text><path d="M318.5 128.5 L325.5 121.5 M323.3 121.5 H325.5 V123.7" fill="none" stroke="#555" stroke-width="0.9"/><path d="M332.0 121.7 L334.5 124.3 L337.0 121.7" fill="none" stroke="#444" stroke-width="1.1"/><path d="M369.5 149.3 V142.5 H376.3 M371.3 144.3 L376.2 149.2 M376.2 146 V149.2 H373" fill="none" stroke="#666" stroke-width="0.9"/></svg>
<svg style="left:390px;top:64px" width="80" height="68" viewBox="390 64 80 68"><text x="404" y="86.6" font-family="Liberation Sans" font-size="13.6" fill="#444">%</text><path d="M407.0 120.9 L409.5 123.5 L412.0 120.9" fill="none" stroke="#444" stroke-width="1.1"/><rect x="453.5" y="70.5" width="8" height="9" fill="#fff" stroke="#8a8a8a" stroke-width="0.8"/><path d="M453.5 73.5 H461.5 M453.5 76.5 H461.5 M456.2 70.5 V79.5 M458.9 70.5 V79.5" stroke="#8a8a8a" stroke-width="0.6"/><rect x="456.2" y="70.5" width="2.7" height="3" fill="#e04040"/><rect x="456.2" y="73.5" width="2.7" height="3" fill="#4a7fd6"/><rect x="456.2" y="76.5" width="2.7" height="3" fill="#e04040"/><rect x="459.5" y="76.8" width="6" height="5.6" fill="#fff" stroke="#777" stroke-width="0.8"/><path d="M461 81 L464 78" stroke="#444" stroke-width="0.8"/><rect x="453.3" y="92.8" width="9" height="8" fill="#eef3fa" stroke="#8a8a8a" stroke-width="0.8"/><path d="M453.3 95 H462.3 M456.3 92.8 V100.8 M459.3 92.8 V100.8" stroke="#8a8a8a" stroke-width="0.6"/><path d="M458.5 103 L465 96.5" stroke="#444" stroke-width="1.3"/><path d="M456.5 104 L459 101.5 L460 102.5 Z" fill="#3a6fc0" stroke="#3a6fc0" stroke-width="0.8"/><rect x="453.3" y="113.8" width="9" height="8" fill="#d7e4f5" stroke="#8a8a8a" stroke-width="0.8"/><path d="M458.5 124.3 L465 117.8" stroke="#444" stroke-width="1.3"/><path d="M456.5 125.3 L459 122.8 L460 123.8 Z" fill="#3a6fc0" stroke="#3a6fc0" stroke-width="0.8"/></svg>
<svg style="left:500px;top:64px" width="100" height="68" viewBox="500 64 100 68"><path d="M590.0 76.05 L592.2 78.35000000000001 L594.4000000000001 76.05" fill="none" stroke="#444" stroke-width="1"/><path d="M552.5999999999999 97.64999999999999 L554.8 99.95 L557.0 97.64999999999999" fill="none" stroke="#444" stroke-width="1"/><path d="M524.0 119.64999999999999 L526.2 121.95 L528.4000000000001 119.64999999999999" fill="none" stroke="#444" stroke-width="1"/></svg>
<svg style="left:620px;top:64px" width="160" height="68" viewBox="620 64 160 68"><rect x="632.5" y="77.5" width="12" height="9" fill="#f4f4f4" stroke="#9a9a9a" stroke-width="0.8"/><path d="M632.5 80.5 H644.5 M632.5 83.5 H644.5 M636.5 77.5 V86.5 M640.5 77.5 V86.5" stroke="#9a9a9a" stroke-width="0.6"/><rect x="636.5" y="80.5" width="4" height="3.8" fill="#3a6fc0"/><path d="M632.5 75.3 H644.5" stroke="#7c9cc8" stroke-width="0.9" stroke-dasharray="1.5 1"/><path d="M635.3 120.7 L637.8 123.3 L640.3 120.7" fill="none" stroke="#444" stroke-width="1.1"/><circle cx="693.3" cy="79.8" r="3.2" fill="none" stroke="#3a6fc0" stroke-width="1.2"/><path d="M690.9 82.4 L687.2 86" stroke="#3a6fc0" stroke-width="1.6" stroke-linecap="round"/><path d="M689.0 120.7 L691.5 123.3 L694.0 120.7" fill="none" stroke="#444" stroke-width="1.1"/><circle cx="749" cy="82.5" r="5.2" fill="#f7931e"/></svg>
<svg style="left:812px;top:68px" width="128" height="32" viewBox="812 68 128 32"><path d="M820.5 72.5 H830.5 C833.5 72.5 836.5 75.5 836.5 78.5 V84 M829.5 93.5 H820.5 A1.8 1.8 0 0 1 818.7 91.7 V74.3 A1.8 1.8 0 0 1 820.5 72.5" fill="none" stroke="#4a7fd6" stroke-width="1.1"/><path d="M826.6 77 C826.4 81 825.4 84.5 823.6 87.2 M826.4 80 C827.6 82.4 829.6 83.9 832.2 84.3" fill="none" stroke="#4a7fd6" stroke-width="1"/><rect x="-4.2" y="-1.9" width="8.4" height="3.8" rx="1.9" transform="translate(838 89.6) rotate(-45)" fill="#f3f3f3" stroke="#4a7fd6" stroke-width="1.1"/><rect x="-4.2" y="-1.9" width="8.4" height="3.8" rx="1.9" transform="translate(833.3 94.3) rotate(-45)" fill="none" stroke="#4a7fd6" stroke-width="1.1"/><path d="M907.5 72.5 H917.5 C920.5 72.5 923.5 75.5 923.5 78.5 V88 M914.5 93.5 H907.5 A1.8 1.8 0 0 1 905.7 91.7 V74.3 A1.8 1.8 0 0 1 907.5 72.5" fill="none" stroke="#4a7fd6" stroke-width="1.1"/><path d="M913.6 77 C913.4 81 912.4 84.5 910.6 87.2 M913.4 80 C914.6 82.4 916.6 83.9 919.2 84.3" fill="none" stroke="#4a7fd6" stroke-width="1"/><rect x="916.2" y="89" width="12.8" height="8.5" rx="1" fill="#f3f3f3" stroke="#4a7fd6" stroke-width="1.1"/><path d="M916.5 89.5 L922.6 94 L928.7 89.5" fill="none" stroke="#4a7fd6" stroke-width="1.1"/></svg>
<svg style="left:975px;top:138px" width="23" height="15" viewBox="975 138 23 15"><path d="M981.5 149.5 L986.2 145 L990.9 149.5" fill="none" stroke="#444" stroke-width="1.1"/></svg>
<svg style="left:85px;top:160px" width="155" height="30" viewBox="85 160 155 30"><path d="M90.8 173.6 L92.9 175.7 L95 173.6 Z" fill="#666"/><circle cx="116.5" cy="170.5" r="0.8" fill="#999"/><circle cx="116.5" cy="174.5" r="0.8" fill="#999"/><circle cx="116.5" cy="178.5" r="0.8" fill="#999"/><path d="M143.5 171 L151 178.5 M151 171 L143.5 178.5" stroke="#9a9a9a" stroke-width="1"/><path d="M178.5 175 L181.5 178.3 L187 171" fill="none" stroke="#9a9a9a" stroke-width="1.1"/><text x="210" y="179" font-family="Liberation Serif" font-style="italic" font-size="12.5" fill="#555">f</text><text x="215.2" y="179" font-family="Liberation Serif" font-style="italic" font-size="9" fill="#555">x</text></svg>
<svg style="left:960px;top:160px" width="38" height="30" viewBox="960 160 38 30"><path d="M982.5 173 L985.5 176 L988.5 173" fill="none" stroke="#555" stroke-width="1.3"/></svg>
<div style="left:0px;top:62px;width:1px;height:493px;background:#24603f;"></div>
<div style="left:1px;top:62px;width:1px;height:493px;background:#a9d3b8;"></div>
<div style="left:2px;top:62px;width:1px;height:493px;background:rgba(220,240,228,0.6);"></div>
<div style="left:999px;top:62px;width:1px;height:493px;background:#24603f;"></div>
<div style="left:998px;top:62px;width:1px;height:493px;background:#a9d3b8;"></div>
<div style="left:997px;top:62px;width:1px;height:493px;background:rgba(220,240,228,0.6);"></div>
</body></html>
